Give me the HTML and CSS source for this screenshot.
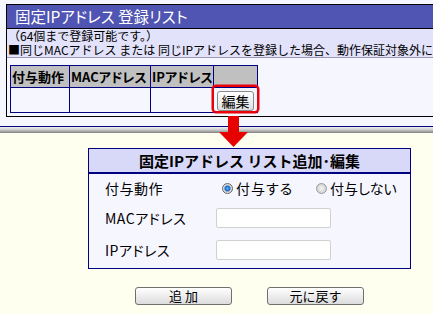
FILE: index.html
```html
<!DOCTYPE html>
<html lang="ja">
<head>
<meta charset="utf-8">
<link rel="stylesheet" href="styles.css">
</head>
<body>
<div class="top">
  <div class="listbox">
    <div class="title">固定IPアドレス 登録リスト</div>
    <div class="note">
      <div class="nline">（64個まで登録可能です。）</div>
      <div class="nline">■同じMACアドレス または 同じIPアドレスを登録した場合、動作保証対象外に</div>
    </div>
    <div class="tablewrap">
      <table class="list">
        <colgroup><col class="c1"><col class="c2"><col class="c3"><col class="c4"></colgroup>
        <tr><th>付与動作</th><th>MACアドレス</th><th>IPアドレス</th><th></th></tr>
        <tr><td></td><td></td><td></td><td class="editcell"><button class="edit">編集</button></td></tr>
      </table>
    </div>
  </div>
</div>
<div class="shadow"></div>
<div class="main">
  <svg class="arrow" width="31" height="31" viewBox="0 0 31 31"><polygon points="10,0 21,0 21,16 30,16 15.5,31 1,16 10,16" fill="#e60000"/></svg>
  <div class="dialog">
    <div class="dhead">固定IPアドレス リスト追加･編集</div>
    <div class="dbody">
      <div class="row r1">
        <span class="label">付与動作</span>
        <span class="radios">
          <span class="opt"><span class="radio on"></span>付与する</span>
          <span class="opt"><span class="radio"></span>付与しない</span>
        </span>
      </div>
      <div class="row">
        <span class="label">MACアドレス</span>
        <input class="field" type="text">
      </div>
      <div class="row">
        <span class="label">IPアドレス</span>
        <input class="field" type="text">
      </div>
    </div>
  </div>
  <div class="buttons">
    <button class="btn">追 加</button>
    <button class="btn">元に戻す</button>
  </div>
</div>
</body>
</html>
```
FILE: styles.css
```css
html, body {
  margin: 0;
  padding: 0;
}
body {
  width: 433px;
  height: 314px;
  overflow: hidden;
  position: relative;
  background: #fffff0;
  font-family: "Noto Sans CJK JP", "Noto Sans", sans-serif;
  color: #000;
}
.top {
  background: #f6f6ff;
  border-bottom: 1px solid #000080;
  padding: 4px 0 0 6px;
  box-sizing: border-box;
  height: 127px;
  overflow: hidden;
}
.listbox {
  width: 520px;
  border: 1px solid #000;
}
.title {
  height: 23px;
  background: #5054b2;
  color: #fff;
  font-size: 15.5px;
  font-feature-settings: "palt";
  line-height: 23px;
  padding-left: 8px;
  border-bottom: 1px solid #000;
}
.note {
  background: #e2e2fa;
  font-size: 12px;
  padding: 0 0 0 1px;
  white-space: nowrap;
  border-bottom: 1px solid #9a9ab8;
}
.nline {
  height: 14px;
  line-height: 14px;
}
.tablewrap {
  background: #f6f6ff;
  padding: 7px 0 3px 3px;
}
.list {
  border-collapse: collapse;
  table-layout: fixed;
  width: 248px;
  font-feature-settings: "palt";
}
.c1 { width: 59px; }
.c2 { width: 81px; }
.c3 { width: 63px; }
.c4 { width: 44px; }
.list th, .list td {
  border: 1px solid #000080;
  padding: 0;
}
.list th {
  background: #c0c0c0;
  height: 21px;
  font-size: 13px;
  font-weight: bold;
  text-align: left;
  padding-left: 1px;
  white-space: nowrap;
  overflow: hidden;
}
.list td {
  height: 23px;
  background: #f6f6ff;
}
.editcell {
  position: relative;
  text-align: center;
}
.editcell::after {
  content: "";
  position: absolute;
  left: -2px;
  top: -3px;
  width: 43px;
  height: 24px;
  border: 2px solid #e8000b;
  border-radius: 4px;
  box-shadow: 0 0 0 0.5px #e8000b;
}
.edit {
  width: 37px;
  height: 20px;
  padding: 0;
  margin-top: 1px;
  border: 1px solid #8a8a8a;
  border-radius: 3px;
  background: linear-gradient(#ffffff, #e0e0e0);
  font-family: inherit;
  font-size: 14px;
  line-height: 18px;
  color: #000;
}
.shadow {
  height: 6px;
  background: linear-gradient(#f0f0f0, #c8c8c8 50%, #808080);
}
.arrow {
  position: absolute;
  left: 218px;
  top: 116px;
}
.main {
  padding-top: 15px;
}
.dialog {
  margin-left: 88px;
  width: 321px;
  border: 1px solid #000080;
  background: #f6f6ff;
}
.dhead {
  height: 23px;
  line-height: 23px;
  background: #d8d8f8;
  border-bottom: 2px solid #000080;
  text-align: center;
  font-size: 15px;
  font-weight: bold;
}
.dbody {
  padding: 0 0 2px 16px;
  font-size: 14px;
  font-feature-settings: "palt";
}
.row {
  display: flex;
  align-items: center;
  height: 32px;
}
.row.r1 {
  height: 28px;
}
.label {
  width: 111px;
  flex: none;
  letter-spacing: 0.5px;
}
.radios {
  display: flex;
  padding-left: 6px;
  font-size: 14px;
}
.opt {
  display: flex;
  align-items: center;
  gap: 3px;
}
.opt:first-child {
  width: 94px;
  letter-spacing: 1px;
}
.radio {
  width: 11px;
  height: 11px;
  border-radius: 50%;
  border: 1px solid #9a9a9a;
  background: radial-gradient(circle, #f4f4f4 0, #d4d4d4 70%);
  box-sizing: border-box;
}
.radio.on {
  background: radial-gradient(circle, #6ab0ff 0, #1565c0 40%, #d8d8d8 55%, #e8e8e8 100%);
  border-color: #666;
}
.field {
  width: 115px;
  height: 20px;
  box-sizing: border-box;
  border: 1px solid #d0d0d0;
  border-radius: 2px;
  background: #fff;
  margin: 0;
  padding: 0;
}
.buttons {
  display: flex;
  gap: 35px;
  margin: 18px 0 0 135px;
}
.btn {
  width: 97px;
  height: 18px;
  padding: 0;
  border: 1px solid #707070;
  border-radius: 3px;
  background: linear-gradient(#ffffff, #dcdcdc);
  font-family: inherit;
  font-size: 13px;
  line-height: 16px;
  color: #000;
}
```
